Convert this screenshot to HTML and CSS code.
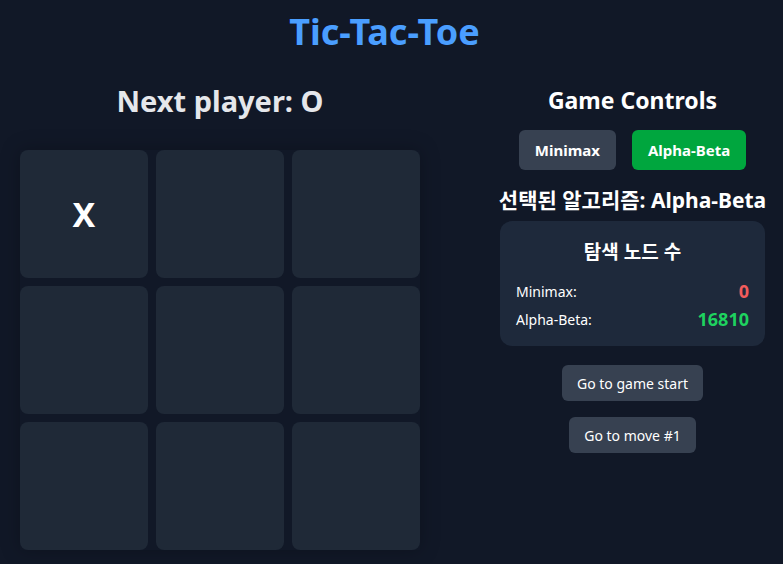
FILE: index.html
```html
<!DOCTYPE html>
<html lang="ko">
<head>
<meta charset="utf-8">
<title>Tic-Tac-Toe</title>
<link rel="stylesheet" href="styles.css">
</head>
<body>
<h1 class="title">Tic-Tac-Toe</h1>
<main class="app">
  <section class="game">
    <h2 class="status">Next player: O</h2>
    <div class="board">
      <button class="cell">X</button>
      <button class="cell"></button>
      <button class="cell"></button>
      <button class="cell"></button>
      <button class="cell"></button>
      <button class="cell"></button>
      <button class="cell"></button>
      <button class="cell"></button>
      <button class="cell"></button>
    </div>
  </section>
  <aside class="controls">
    <h2 class="controls-title">Game Controls</h2>
    <div class="algo-buttons">
      <button class="algo-btn">Minimax</button>
      <button class="algo-btn active">Alpha-Beta</button>
    </div>
    <p class="selected">선택된 알고리즘: Alpha-Beta</p>
    <div class="card">
      <h3 class="card-title">탐색 노드 수</h3>
      <div class="stat-row"><span>Minimax:</span><strong class="val red">0</strong></div>
      <div class="stat-row"><span>Alpha-Beta:</span><strong class="val green">16810</strong></div>
    </div>
    <ol class="moves">
      <li><button class="move-btn">Go to game start</button></li>
      <li><button class="move-btn">Go to move #1</button></li>
    </ol>
  </aside>
</main>
</body>
</html>
```

FILE: styles.css
```css
* { box-sizing: border-box; }
html, body { margin: 0; padding: 0; }
body {
  background: #111827;
  color: #ffffff;
  font-family: "Noto Sans", "Noto Sans CJK KR", sans-serif;
  width: 783px;
  height: 564px;
  overflow: hidden;
}
.title {
  margin: 0;
  padding: 9px 14px 0 0;
  text-align: center;
  font-size: 36px;
  line-height: 46px;
  font-weight: 700;
  color: #4a9eff;
}
.app {
  display: flex;
  gap: 80px;
  padding: 0 18px 0 20px;
  margin-top: 26px;
}
.game {
  width: 400px;
  display: flex;
  flex-direction: column;
  align-items: center;
}
.status {
  margin: 0;
  font-size: 29px;
  line-height: 40px;
  font-weight: 700;
  color: #e5e7eb;
}
.board {
  margin-top: 29px;
  display: grid;
  grid-template-columns: repeat(3, 128px);
  grid-auto-rows: 128px;
  gap: 8px;
  box-shadow: 0 0 18px rgba(0, 0, 0, 0.25);
}
.cell {
  border: none;
  border-radius: 8px;
  background: #1f2937;
  color: #ffffff;
  font-family: inherit;
  font-size: 34px;
  font-weight: 700;
  padding: 0;
}
.controls {
  width: 265px;
  display: flex;
  flex-direction: column;
  align-items: center;
}
.controls-title {
  margin: 0;
  padding-top: 3px;
  font-size: 23px;
  line-height: 32px;
  font-weight: 700;
}
.algo-buttons {
  display: flex;
  gap: 16px;
  margin-top: 14px;
}
.algo-btn {
  height: 40px;
  padding: 0 16px;
  border: none;
  border-radius: 6px;
  background: #374151;
  color: #ffffff;
  font-family: inherit;
  font-size: 15px;
  font-weight: 700;
}
.algo-btn.active { background: #00a63e; }
.selected {
  margin: 14px 0 0;
  font-size: 21px;
  line-height: 32px;
  font-weight: 700;
  white-space: nowrap;
}
.card {
  align-self: stretch;
  margin-top: 5px;
  background: #1e293b;
  border-radius: 12px;
  padding: 16px 16px 13px;
}
.card-title {
  margin: 0 0 10px;
  text-align: center;
  font-size: 19px;
  line-height: 30px;
  font-weight: 700;
}
.stat-row {
  display: flex;
  justify-content: space-between;
  align-items: center;
  height: 28px;
  font-size: 14px;
}
.val { font-size: 18px; font-weight: 700; }
.red { color: #f25c5c; }
.green { color: #1ed25f; }
.moves {
  list-style: none;
  margin: 19px 0 0;
  padding: 0;
  display: flex;
  flex-direction: column;
  align-items: center;
  gap: 16px;
}
.move-btn {
  height: 36px;
  padding: 0 15px;
  border: none;
  border-radius: 6px;
  background: #374151;
  color: #ffffff;
  font-family: inherit;
  font-size: 14px;
}
```
